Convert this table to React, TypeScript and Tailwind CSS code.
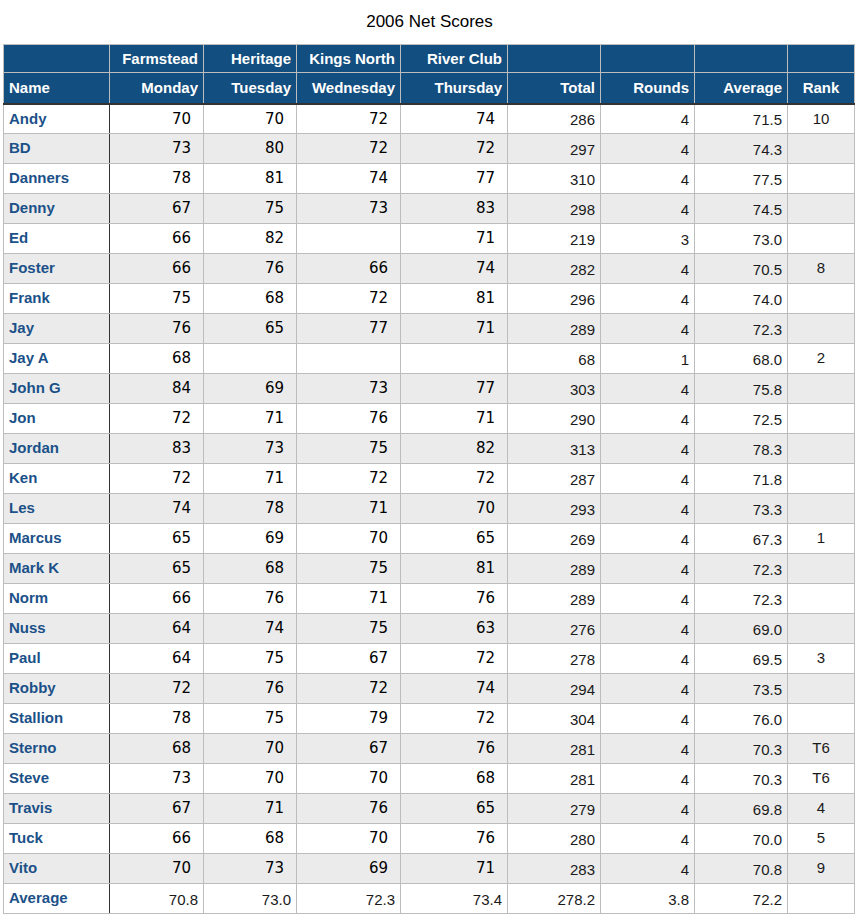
const rows: [string, (number | null)[], number, number, string, string][] = [
  ["Andy", [70, 70, 72, 74], 286, 4, "71.5", "10"],
  ["BD", [73, 80, 72, 72], 297, 4, "74.3", ""],
  ["Danners", [78, 81, 74, 77], 310, 4, "77.5", ""],
  ["Denny", [67, 75, 73, 83], 298, 4, "74.5", ""],
  ["Ed", [66, 82, null, 71], 219, 3, "73.0", ""],
  ["Foster", [66, 76, 66, 74], 282, 4, "70.5", "8"],
  ["Frank", [75, 68, 72, 81], 296, 4, "74.0", ""],
  ["Jay", [76, 65, 77, 71], 289, 4, "72.3", ""],
  ["Jay A", [68, null, null, null], 68, 1, "68.0", "2"],
  ["John G", [84, 69, 73, 77], 303, 4, "75.8", ""],
  ["Jon", [72, 71, 76, 71], 290, 4, "72.5", ""],
  ["Jordan", [83, 73, 75, 82], 313, 4, "78.3", ""],
  ["Ken", [72, 71, 72, 72], 287, 4, "71.8", ""],
  ["Les", [74, 78, 71, 70], 293, 4, "73.3", ""],
  ["Marcus", [65, 69, 70, 65], 269, 4, "67.3", "1"],
  ["Mark K", [65, 68, 75, 81], 289, 4, "72.3", ""],
  ["Norm", [66, 76, 71, 76], 289, 4, "72.3", ""],
  ["Nuss", [64, 74, 75, 63], 276, 4, "69.0", ""],
  ["Paul", [64, 75, 67, 72], 278, 4, "69.5", "3"],
  ["Robby", [72, 76, 72, 74], 294, 4, "73.5", ""],
  ["Stallion", [78, 75, 79, 72], 304, 4, "76.0", ""],
  ["Sterno", [68, 70, 67, 76], 281, 4, "70.3", "T6"],
  ["Steve", [73, 70, 70, 68], 281, 4, "70.3", "T6"],
  ["Travis", [67, 71, 76, 65], 279, 4, "69.8", "4"],
  ["Tuck", [66, 68, 70, 76], 280, 4, "70.0", "5"],
  ["Vito", [70, 73, 69, 71], 283, 4, "70.8", "9"],
];

const widths = [106, 94, 93, 104, 107, 93, 94, 93, 67];
const courses = ["Farmstead", "Heritage", "Kings North", "River Club", "", "", "", ""];
const days = ["Monday", "Tuesday", "Wednesday", "Thursday", "Total", "Rounds", "Average"];

const base = "border border-[#bdbdbd] h-[30px] text-right";
const score = "pl-[5px] pr-[12px] font-['DejaVu_Sans',sans-serif] text-[15px] text-black align-middle";
const plain = "px-[5px] text-[15px] text-[#1a1a1a] align-bottom pb-[2px]";
const hd = "border border-[#bdbdbd] border-b-2 border-b-[#333] px-[5px] align-bottom pb-[3px]";

export default function App() {
  return (
    <div className="bg-white w-[859px] h-[918px] font-['Liberation_Sans',Arial,sans-serif]">
      <h1 className="text-center text-[17px] text-black pt-[9px] h-[44px]">2006 Net Scores</h1>
      <table className="ml-[3px] border-collapse table-fixed w-[851px]">
        <colgroup>
          {widths.map((w, i) => (
            <col key={i} style={{ width: w }} />
          ))}
        </colgroup>
        <thead className="bg-[#124e7f] text-white font-bold text-[15px]">
          <tr className="h-[28px]">
            <th className="border border-[#bdbdbd]" />
            {courses.map((c, i) => (
              <th key={i} className="border border-[#bdbdbd] px-[5px] text-right align-bottom pb-[2px]">
                {c}
              </th>
            ))}
          </tr>
          <tr className="h-[31px]">
            <th className={`${hd} text-left`}>Name</th>
            {days.map((d) => (
              <th key={d} className={`${hd} text-right`}>
                {d}
              </th>
            ))}
            <th className={`${hd} text-center`}>Rank</th>
          </tr>
        </thead>
        <tbody>
          {rows.map(([name, s, total, rounds, avg, rank], i) => (
            <tr key={name} className={i % 2 ? "bg-[#ebebeb]" : "bg-white"}>
              <td className="border border-[#bdbdbd] border-r-[#333] px-[5px] h-[30px] text-left text-[15px] font-bold text-[#1b5188]">
                {name}
              </td>
              {s.map((v, j) => (
                <td key={j} className={`${base} ${score}`}>
                  {v ?? ""}
                </td>
              ))}
              <td className={`${base} ${plain}`}>{total}</td>
              <td className={`${base} ${plain}`}>{rounds}</td>
              <td className={`${base} ${plain}`}>{avg}</td>
              <td className="border border-[#bdbdbd] h-[30px] text-center text-[15px] text-[#1a1a1a] align-middle">
                {rank}
              </td>
            </tr>
          ))}
          <tr className="bg-white">
            <td className="border border-[#bdbdbd] border-r-[#333] px-[5px] h-[30px] text-left text-[15px] font-bold text-[#1b5188]">
              Average
            </td>
            {["70.8", "73.0", "72.3", "73.4", "278.2", "3.8", "72.2"].map((v, j) => (
              <td key={j} className={`${base} ${plain}`}>
                {v}
              </td>
            ))}
            <td className="border border-[#bdbdbd] h-[30px]" />
          </tr>
        </tbody>
      </table>
    </div>
  );
}
